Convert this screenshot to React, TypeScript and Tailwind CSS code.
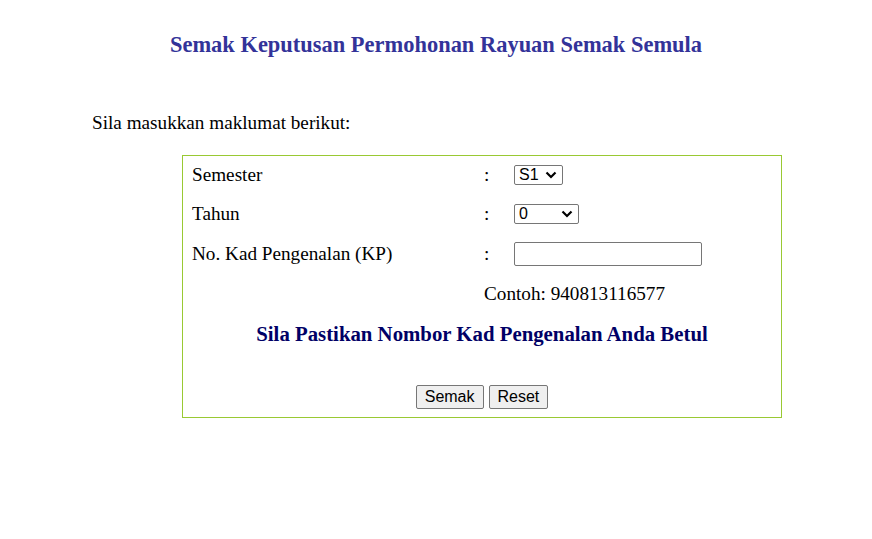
import React from "react";

const Chevron = () => (
  <svg className="pointer-events-none absolute top-1/2 right-[6px] -translate-y-1/2" width="12" height="8" viewBox="0 0 12 8">
    <polyline points="1.5,1.5 6,6 10.5,1.5" fill="none" stroke="#000" strokeWidth="2.2" />
  </svg>
);

const Row = ({ h, label, children }: { h: string; label: React.ReactNode; children: React.ReactNode }) => (
  <div className={`grid grid-cols-[301px_30px_1fr] items-center ${h}`}>
    <div className="pl-[9px]">{label}</div>
    <div>{children ? ":" : ""}</div>
    <div className="flex">{children}</div>
  </div>
);

export default function App() {
  return (
    <div className="min-h-[539px] w-full bg-white text-black font-['Liberation_Serif',serif]">
      <h1 className="pt-[31px] text-center text-[22.46px] font-bold leading-[28px] text-[#333399]">
        Semak Keputusan Permohonan Rayuan Semak Semula
      </h1>
      <p className="mt-[52px] pl-[92px] text-[19.2px] leading-[24px]">Sila masukkan maklumat berikut:</p>
      <div className="ml-[182px] mt-[20px] w-[600px] border border-[#99c933] pb-[8px] text-[19.2px] leading-[24px]">
        <Row h="h-[38px]" label="Semester">
          <div className="relative inline-flex">
            <select className="h-[20px] w-[49px] appearance-none rounded-[2px] border border-[#767676] bg-white pl-[4px] font-['Liberation_Sans',sans-serif] text-[16px] leading-[18px] text-black">
              <option>S1</option>
              <option>S2</option>
            </select>
            <Chevron />
          </div>
        </Row>
        <Row h="h-[40px]" label="Tahun">
          <div className="relative inline-flex">
            <select className="h-[20px] w-[65px] appearance-none rounded-[2px] border border-[#767676] bg-white pl-[4px] font-['Liberation_Sans',sans-serif] text-[16px] leading-[18px] text-black">
              <option>0</option>
            </select>
            <Chevron />
          </div>
        </Row>
        <Row h="h-[40px]" label="No. Kad Pengenalan (KP)">
          <input
            type="text"
            className="h-[24px] w-[188px] rounded-[2px] border border-[#767676] bg-white px-[2px] font-['Liberation_Sans',sans-serif] text-[16px]"
          />
        </Row>
        <div className="grid h-[40px] grid-cols-[301px_1fr] items-center">
          <div />
          <div>Contoh: 940813116577</div>
        </div>
        <h2 className="flex h-[40px] items-center justify-center text-[20.8px] font-bold text-[#000066]">
          Sila Pastikan Nombor Kad Pengenalan Anda Betul
        </h2>
        <div className="mt-[31px] flex justify-center gap-[5px]">
          <button className="h-[24px] rounded-[2px] border border-[#767676] bg-[#efefef] px-[8px] font-['Liberation_Sans',sans-serif] text-[16px] leading-[20px] text-black">
            Semak
          </button>
          <button className="h-[24px] rounded-[2px] border border-[#767676] bg-[#efefef] px-[8px] font-['Liberation_Sans',sans-serif] text-[16px] leading-[20px] text-black">
            Reset
          </button>
        </div>
      </div>
    </div>
  );
}
